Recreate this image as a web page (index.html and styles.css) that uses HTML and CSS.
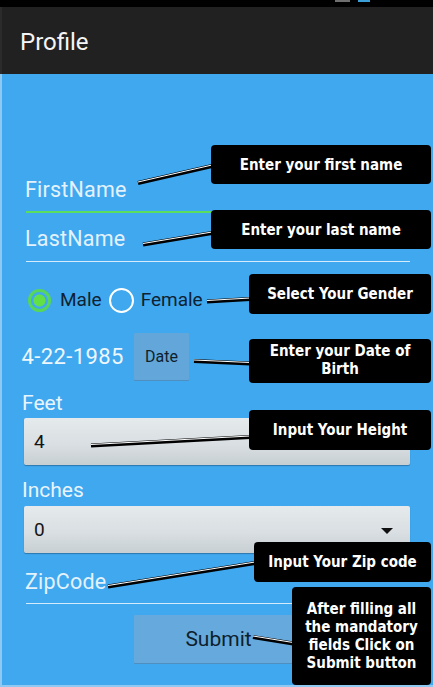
FILE: index.html
```html
<!DOCTYPE html>
<html lang="en">
<head>
<meta charset="utf-8">
<title>Profile</title>
<link rel="stylesheet" href="styles.css">
</head>
<body>
<div class="screen">
  <div class="statusbar"><span class="sb-icon sb-gray"></span><span class="sb-icon sb-blue"></span></div>
  <header class="appbar"><h1 class="title">Profile</h1></header>
  <main class="form">
    <div class="field field-active"><span class="hint">FirstName</span></div>
    <div class="field field-last"><span class="hint">LastName</span></div>
    <div class="radio-row">
      <span class="radio radio-on"></span><span class="radio-label label-male">Male</span>
      <span class="radio radio-off"></span><span class="radio-label label-female">Female</span>
    </div>
    <div class="date-row"><span class="date-text">4-22-1985</span><button class="btn btn-date">Date</button></div>
    <div class="label label-feet">Feet</div>
    <div class="box box-feet"><span class="box-value">4</span></div>
    <div class="label label-inches">Inches</div>
    <div class="box box-spinner"><span class="box-value">0</span><span class="caret"></span></div>
    <div class="field field-zip"><span class="hint">ZipCode</span></div>
    <button class="btn btn-submit">Submit</button>
  </main>

  <svg class="connectors" width="433" height="687" viewBox="0 0 433 687">
    <g class="c-dark">
      <line x1="138" y1="183" x2="212" y2="166"/>
      <line x1="143" y1="244.5" x2="212" y2="233"/>
      <line x1="207" y1="301.5" x2="250" y2="299"/>
      <line x1="194" y1="361" x2="250" y2="363.5"/>
      <line x1="91" y1="445.5" x2="250" y2="437"/>
      <line x1="108" y1="586.5" x2="255" y2="563"/>
      <line x1="253" y1="637" x2="293" y2="643.5"/>
    </g>
    <g class="c-light">
      <line x1="138" y1="182" x2="212" y2="165"/>
      <line x1="143" y1="243.5" x2="212" y2="232"/>
      <line x1="207" y1="300.5" x2="250" y2="298"/>
      <line x1="194" y1="360" x2="250" y2="362.5"/>
      <line x1="91" y1="444.5" x2="250" y2="436"/>
      <line x1="108" y1="585.5" x2="255" y2="562"/>
      <line x1="253" y1="636" x2="293" y2="642.5"/>
    </g>
  </svg>

  <div class="note note-first">Enter your first name</div>
  <div class="note note-last">Enter your last name</div>
  <div class="note note-gender">Select Your Gender</div>
  <div class="note note-dob">Enter your Date of<br>Birth</div>
  <div class="note note-height">Input Your Height</div>
  <div class="note note-zip">Input Your Zip code</div>
  <div class="note note-submit">After filling all<br>the mandatory<br>fields Click on<br>Submit button</div>
</div>
</body>
</html>
```

FILE: styles.css
```css
* { box-sizing: border-box; }

html, body {
  margin: 0;
  padding: 0;
  background: #40a8ef;
}

.screen {
  position: relative;
  width: 433px;
  height: 687px;
  overflow: hidden;
  display: flex;
  flex-direction: column;
  font-family: Roboto, "Noto Sans", sans-serif;
}

/* status bar */
.statusbar {
  height: 7px;
  background: #000;
  display: flex;
  align-items: flex-start;
  gap: 8px;
  padding-left: 335px;
}
.sb-icon { display: block; height: 2px; }
.sb-gray { width: 15px; background: #6f6f6f; }
.sb-blue { width: 12px; background: #3c9ed6; }

/* app bar */
.appbar {
  height: 67px;
  background: #212121;
  padding: 21px 0 0 20px;
  box-shadow: inset 2px 0 0 #2b2b2b;
}
.title {
  margin: 0;
  font-size: 24px;
  font-weight: 400;
  line-height: 28px;
  color: #f5f5f5;
}

/* form */
.form {
  flex: 1;
  background: #40a8ef;
  padding: 104px 23px 0 20px;
  display: flex;
  flex-direction: column;
  align-items: flex-start;
  box-shadow: inset 2px 0 0 #8fc9f1, inset 0 -2px 0 #8fc9f1;
}

.field {
  align-self: stretch;
  margin-left: 6px;
  font-size: 21.5px;
  letter-spacing: 0.2px;
  line-height: 24px;
  padding-bottom: 9px;
  border-bottom: 1px solid #d3ebfb;
}
.hint { color: #e3f2fc; margin-left: -1px; }
.field-active { border-bottom: 2px solid #5ade5c; }
.field-last { margin-top: 14px; padding-bottom: 10px; }
.field-zip { margin-top: 17px; }

.radio-row {
  margin-top: 26px;
  margin-left: 8px;
  height: 24px;
  display: flex;
  align-items: center;
}
.radio {
  display: block;
  width: 23px;
  height: 23px;
  border-radius: 50%;
  flex: none;
}
.radio-on {
  border: 3px solid #56d65a;
  background: radial-gradient(circle, #62e046 0 5.5px, transparent 6.5px);
}
.radio-off {
  border: 2.5px solid #ffffff;
  width: 25px;
  height: 25px;
}
.radio-label {
  font-size: 19px;
  line-height: 24px;
  color: #0e2233;
}
.label-male { margin-left: 9px; margin-right: 7px; }
.label-female { margin-left: 7px; }

.date-row {
  margin-top: 21px;
  height: 47px;
  display: flex;
  align-items: center;
}
.date-text {
  width: 114px;
  padding-left: 1.5px;
  font-size: 22px;
  letter-spacing: 0.4px;
  line-height: 24px;
  color: #eef7fd;
}

.btn {
  border: none;
  margin: 0;
  padding: 0;
  font-family: Roboto, "Noto Sans", sans-serif;
  color: #0f1f2c;
  background: #62a6da;
  box-shadow: 0 1px 0 #4f8fc0;
  border-radius: 1px;
}
.btn-date {
  width: 55px;
  height: 47px;
  font-size: 16px;
}
.btn-submit {
  margin-top: 11px;
  margin-left: 114px;
  width: 169px;
  height: 48px;
  font-size: 21px;
  background: #65a9dd;
}

.label {
  margin-left: 2px;
  font-size: 21px;
  line-height: 24px;
  color: #e9f5fd;
}
.label-feet { margin-top: 11px; }
.label-inches { margin-top: 13px; }

.box {
  align-self: stretch;
  margin-left: 4px;
  height: 47px;
  display: flex;
  align-items: center;
  padding: 0 17px 0 10px;
  background: linear-gradient(#e6eaec, #d9dfe2 55%, #c8cfd3);
  border-radius: 2px;
  box-shadow: 0 1px 1px rgba(20, 60, 90, 0.45);
}
.box-feet { margin-top: 3px; }
.box-spinner { margin-top: 4px; justify-content: space-between; }
.box-value {
  font-size: 19px;
  line-height: 24px;
  color: #141414;
}
.caret {
  width: 0;
  height: 0;
  margin-top: 3px;
  border-left: 6px solid transparent;
  border-right: 6px solid transparent;
  border-top: 6px solid #111;
}

/* annotation overlay */
.connectors {
  position: absolute;
  left: 0;
  top: 0;
  pointer-events: none;
}
.c-dark line { stroke: #000; stroke-width: 4; stroke-linecap: butt; }
.c-light line { stroke: #ffffff; stroke-width: 1; stroke-linecap: butt; }

.note {
  position: absolute;
  background: #000;
  color: #fff;
  border-radius: 4px;
  display: flex;
  align-items: center;
  justify-content: center;
  text-align: center;
  font-family: "DejaVu Sans Condensed", "DejaVu Sans", Verdana, sans-serif;
  font-stretch: semi-condensed;
  font-weight: 700;
  font-size: 15px;
  line-height: 18px;
}
.note-first  { left: 211px; top: 145px; width: 220px; height: 39px; }
.note-last   { left: 211px; top: 210px; width: 220px; height: 39px; }
.note-gender { left: 249px; top: 274px; width: 182px; height: 40px; }
.note-dob    { left: 249px; top: 339px; width: 182px; height: 44px; padding-bottom: 3px; }
.note-height { left: 249px; top: 410px; width: 182px; height: 40px; }
.note-zip    { left: 254px; top: 542px; width: 177px; height: 40px; }
.note-submit { left: 292px; top: 587px; width: 139px; height: 98px; }
```
